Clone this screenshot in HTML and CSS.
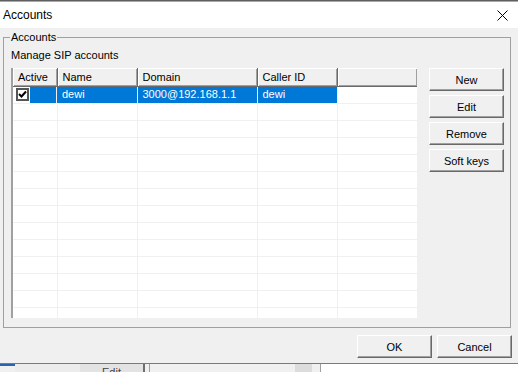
FILE: index.html
```html
<!DOCTYPE html>
<html lang="en">
<head>
    <meta charset="UTF-8">
    <title>Accounts</title>
    <link rel="stylesheet" href="styles.css">
</head>
<body>
    <div class="window">
        <div class="titlebar">
            <span class="title">Accounts</span>
            <svg class="close" width="11" height="11" viewBox="0 0 11 11">
                <path d="M0.5 0.5 L10.5 10.5 M10.5 0.5 L0.5 10.5" stroke="#000" stroke-width="1" fill="none"/>
            </svg>
        </div>
        <div class="content">
            <fieldset class="group">
                <legend>Accounts</legend>
                <p class="hint">Manage SIP accounts</p>
                <div class="group-body">
                    <div class="list">
                        <table class="accounts">
                            <thead>
                                <tr>
                                    <th class="col-active">Active</th>
                                    <th class="col-name">Name</th>
                                    <th class="col-domain">Domain</th>
                                    <th class="col-caller">Caller ID</th>
                                    <th class="col-rest"></th>
                                </tr>
                            </thead>
                            <tbody id="rows">
                                <tr class="selected">
                                    <td class="check-cell">
                                        <span class="checkbox">
                                            <svg width="9" height="9" viewBox="0 0 9 9">
                                                <path d="M1 4 L3.5 6.5 L8 1.5" stroke="#000" stroke-width="2" fill="none"/>
                                            </svg>
                                        </span>
                                        <span class="fill"></span>
                                    </td>
                                    <td>dewi</td>
                                    <td>3000@192.168.1.1</td>
                                    <td>dewi</td>
                                    <td class="blank"></td>
                                </tr>
                            </tbody>
                        </table>
                    </div>
                    <div class="side-buttons">
                        <button class="btn">New</button>
                        <button class="btn">Edit</button>
                        <button class="btn">Remove</button>
                        <button class="btn">Soft keys</button>
                    </div>
                </div>
            </fieldset>
            <div class="dialog-buttons">
                <button class="btn">OK</button>
                <button class="btn">Cancel</button>
            </div>
        </div>
    </div>

    <div class="behind">
        <span class="seg seg-blue"></span>
        <span class="seg seg-a"></span>
        <span class="seg seg-edit">Edit</span>
        <span class="seg seg-line-dark"></span>
        <span class="seg seg-b"></span>
        <span class="seg seg-line"></span>
        <span class="seg seg-c"></span>
        <span class="seg seg-block"></span>
        <span class="seg seg-d"></span>
        <span class="seg seg-line"></span>
        <span class="seg seg-white"></span>
    </div>

    <script>
        // Empty list rows
        const rows = document.getElementById('rows');
        for (let i = 0; i < 14; i++) {
            rows.innerHTML += '<tr><td></td><td></td><td></td><td></td><td class="blank"></td></tr>';
        }
    </script>
</body>
</html>
```

FILE: styles.css
```css
/* Dialog styles */
* {
    box-sizing: border-box;
}

body {
    margin: 0;
    width: 518px;
    height: 372px;
    overflow: hidden;
    font-family: 'Liberation Sans', Arial, sans-serif;
    font-size: 11px;
    color: #000;
    background-color: #fff;
}

.window {
    height: 364px;
    border-top: 1px solid #5f5f5f;
    border-bottom: 1px solid #7a7a7a;
    background-color: #f0f0f0;
}

.titlebar {
    display: flex;
    align-items: center;
    justify-content: space-between;
    height: 27px;
    padding: 0 10px 0 3px;
    background-color: #fff;
    border-top: 1px solid #a8a8a8;
}

.title {
    font-size: 12px;
    line-height: 14px;
}

.close {
    display: block;
    margin-top: 1px;
}

.content {
    height: 335px;
    display: flex;
    flex-direction: column;
}

.group {
    margin: 3px 7px 0 3px;
    padding: 0 5px 9px 7px;
    border: 1px solid #a0a0a0;
    min-width: 0;
}

.group legend {
    padding: 0 1px;
    margin-left: -1px;
    line-height: 12px;
}

.hint {
    margin: 6px 0 7px;
    line-height: 12px;
}

.group-body {
    display: flex;
    align-items: flex-start;
}

.list {
    width: 406px;
    height: 250px;
    overflow: hidden;
    background-color: #fff;
    border-left: 2px solid #a0a0a0;
}

.accounts {
    border-collapse: collapse;
    table-layout: fixed;
    width: 404px;
}

.accounts th {
    height: 18px;
    padding: 0 0 0 5px;
    font-weight: normal;
    text-align: left;
    background-color: #f0f0f0;
    border-right: 1px solid #696969;
    border-bottom: 1px solid #696969;
    box-shadow: inset 1px 1px #fff, inset -1px -1px #a0a0a0;
    line-height: 16px;
}

.col-active { width: 44px; }
.col-name { width: 80px; }
.col-domain { width: 120px; }
.col-caller { width: 80px; }
.col-rest { width: 80px; }

.accounts td {
    height: 17px;
    padding: 0 0 0 5px;
    border-right: 1px solid #f0f0f0;
    border-bottom: 1px solid #f0f0f0;
    white-space: nowrap;
    line-height: 15px;
}

.accounts td.blank {
    border-right: none;
}

.selected td {
    background-color: #0078d7;
    color: #fff;
}

.selected td.blank {
    background-color: #fff;
}

.selected td.check-cell {
    background-color: #fff;
    padding: 0;
}

.check-cell {
    display: flex;
    align-items: center;
}

.checkbox {
    display: flex;
    align-items: center;
    justify-content: center;
    width: 13px;
    height: 13px;
    margin: 0 1px 0 3px;
    background-color: #fff;
    border: 2px solid #555;
}

.fill {
    flex: 1;
    align-self: stretch;
    background-color: #0078d7;
}

.side-buttons {
    display: flex;
    flex-direction: column;
    gap: 4px;
    margin-left: 12px;
}

.btn {
    width: 75px;
    height: 23px;
    padding: 0;
    font-family: 'Liberation Sans', Arial, sans-serif;
    font-size: 11px;
    color: #000;
    background-color: #f0f0f0;
    border: 1px solid;
    border-color: #fff #696969 #696969 #fff;
    box-shadow: inset -1px -1px #a0a0a0;
    border-radius: 0;
}

.dialog-buttons {
    display: flex;
    justify-content: flex-end;
    gap: 5px;
    margin-top: 7px;
    padding-right: 6px;
}

/* Windows behind the dialog */
.behind {
    display: flex;
    height: 8px;
    overflow: hidden;
}

.seg {
    display: block;
    height: 8px;
}

.seg-blue {
    width: 15px;
    background-color: #f0f0f0;
    border-top: 2px solid #2a64b0;
}

.seg-a {
    width: 65px;
    background-color: #ececec;
}

.seg-edit {
    width: 63px;
    background-color: #e3e3e3;
    color: #444;
    text-align: center;
    line-height: 14px;
    padding-top: 1px;
}

.seg-line-dark {
    width: 2px;
    background-color: #6e6e6e;
}

.seg-b {
    width: 4px;
    background-color: #f0f0f0;
}

.seg-line {
    width: 1px;
    background-color: #a0a0a0;
}

.seg-c {
    width: 145px;
    background-color: #f0f0f0;
}

.seg-block {
    width: 17px;
    background-color: #dcdcdc;
}

.seg-d {
    width: 8px;
    background-color: #f0f0f0;
}

.seg-white {
    flex: 1;
    background-color: #fff;
}
```
